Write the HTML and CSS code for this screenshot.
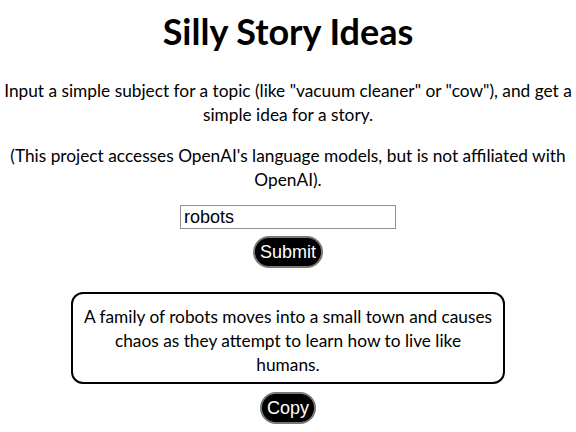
FILE: index.html
```html
<!DOCTYPE html>
<html>
<head>
<meta charset="utf-8">
<title>Silly Story Ideas</title>
<link rel="stylesheet" href="styles.css">
</head>
<body>
<main class="page">
  <h1 class="title">Silly Story Ideas</h1>
  <p class="intro">Input a simple subject for a topic (like "vacuum cleaner" or "cow"), and get a simple idea for a story.</p>
  <p class="intro">(This project accesses OpenAI's language models, but is not affiliated with OpenAI).</p>
  <form class="form">
    <input class="topic" type="text" value="robots">
    <button class="pill" type="button">Submit</button>
  </form>
  <div class="result">A family of robots moves into a small town and causes chaos as they attempt to learn how to live like<br>humans.</div>
  <button class="pill copy" type="button">Copy</button>
</main>
</body>
</html>
```
FILE: styles.css
```css
html, body {
  margin: 0;
  padding: 0;
  background: #fff;
}
.page {
  font-family: "Lato", "Open Sans", sans-serif;
  font-size: 17.3px;
  line-height: 23.6px;
  color: #000;
  text-align: center;
  display: flex;
  flex-direction: column;
  align-items: center;
  padding: 7px 0 0;
}
.title {
  font-size: 36px;
  line-height: 48px;
  font-weight: 700;
  margin: 0 0 24px;
  color: #000;
}
.intro {
  margin: 0 0 18px;
}
.form {
  display: flex;
  flex-direction: column;
  align-items: center;
  margin-top: -4px;
}
.topic {
  width: 216px;
  height: 24px;
  box-sizing: border-box;
  border: 1px solid #8f8f8f;
  font-family: "Liberation Sans", Arial, sans-serif;
  font-size: 18px;
  padding: 0 3px;
  color: #000;
  margin: 0;
}
.pill {
  background: #000;
  color: #fff;
  border: 2px solid #777;
  border-radius: 16px;
  font-family: "Liberation Sans", Arial, sans-serif;
  font-size: 18px;
  height: 32px;
  padding: 0 5px;
  margin-top: 7px;
  box-sizing: border-box;
}
.result {
  margin-top: 24px;
  width: 434px;
  box-sizing: border-box;
  border: 2px solid #000;
  border-radius: 12px;
  padding: 11px 6px 6px;
}
.copy {
  margin-top: 8px;
}
```
